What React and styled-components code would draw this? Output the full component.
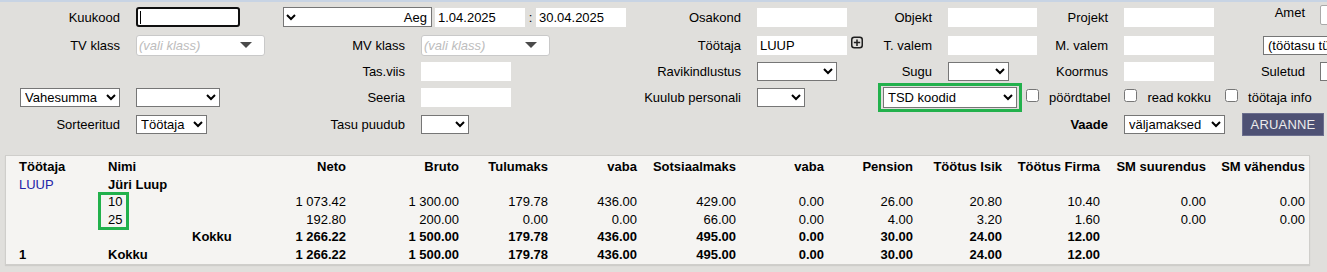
import React from "react";
import styled, { createGlobalStyle, css } from "styled-components";

const GlobalStyle = createGlobalStyle`
  html, body { margin: 0; padding: 0; overflow: hidden; background: #e0dfdc; }
  body { font-family: "Liberation Sans", Arial, sans-serif; font-size: 13px; color: #000; }
`;

const font = css`
  font-family: "Liberation Sans", Arial, sans-serif;
  font-size: 13px;
  color: #000;
`;

const place = css`
  grid-row: ${(p) => p.$r};
  grid-column: ${(p) => p.$c} / ${(p) => (p.$e ? p.$e : `span ${p.$s || 1}`)};
`;

const Page = styled.div`
  width: 1327px;
  height: 272px;
  overflow: hidden;
  box-sizing: border-box;
  border-top: 2px solid #c8d4e4;
`;

const Filters = styled.form`
  display: grid;
  grid-template-columns: 136px 144px 141px 209px 127px 109px 82px 89px 87px 90px 106px 1fr;
  grid-template-rows: 28px 28px 25px 26px 28px;
  padding-top: 1px;
  margin: 0;
  align-items: center;
`;

const Label = styled.label`
  ${place};
  ${font};
  text-align: right;
  white-space: nowrap;
  line-height: 15px;
  padding-right: ${(p) => (p.$pr != null ? p.$pr : 16)}px;
  font-weight: ${(p) => (p.$bold ? "bold" : "normal")};
  align-self: ${(p) => (p.$top ? "start" : "center")};
  padding-top: ${(p) => (p.$top ? 2 : 0)}px;
`;

const Field = styled.div`
  ${place};
  display: flex;
  align-items: center;
  gap: ${(p) => p.$gap || 0}px;
  padding-left: ${(p) => p.$pl || 0}px;
`;

const TextInput = styled.input`
  ${place};
  ${font};
  width: ${(p) => p.$w || 90}px;
  height: 19px;
  box-sizing: border-box;
  border: none;
  background: #fff;
  padding: 0 3px;
  margin: 0;
  outline: none;
`;

const FramedInput = styled.input`
  ${place};
  ${font};
  align-self: start;
  margin: 2px 0 0 0;
  width: 80px;
  height: 20px;
  box-sizing: border-box;
  border: 1px solid #a9a9a9;
  border-radius: 2px;
  background: #fff;
`;

const FocusField = styled.div`
  ${place};
  position: relative;
  width: 104px;
  height: 20px;
  box-sizing: border-box;
  border: 2px solid #101010;
  border-radius: 3px;
  background: #fff;
  &::after {
    content: "";
    position: absolute;
    left: 2px;
    top: 2px;
    width: 1px;
    height: 13px;
    background: #000;
  }
`;

const BareInput = styled.input`
  ${font};
  width: 100%;
  height: 100%;
  box-sizing: border-box;
  border: none;
  outline: none;
  background: transparent;
  padding: 0 3px;
  margin: 0;
`;

const Select = styled.select`
  ${place};
  ${font};
  width: ${(p) => p.$w}px;
  height: ${(p) => p.$h || 19}px;
  box-sizing: border-box;
  background: #fff;
  border: 1px solid #767676;
  border-radius: 0;
  margin: 0 ${(p) => p.$mr || 0}px 0 ${(p) => p.$ml || 0}px;
  justify-self: ${(p) => p.$justify || "start"};
`;

const ClassPicker = styled.div`
  ${place};
  width: 129px;
  height: 21px;
  box-sizing: border-box;
  border: 1px solid #c9c9c9;
  border-radius: 3px;
  background: #fff;
  display: flex;
  align-items: center;
  justify-content: space-between;
  padding: 0 12px 0 2px;
`;

const Placeholder = styled.span`
  ${font};
  font-style: italic;
  color: #bdbdbd;
`;

const Triangle = styled.span`
  width: 0;
  height: 0;
  border-left: 6px solid transparent;
  border-right: 6px solid transparent;
  border-top: 6px solid #4a4a4a;
`;

const Colon = styled.span`
  width: 11px;
  text-align: center;
  ${font};
`;

const PlusIcon = styled.svg`
  align-self: flex-start;
  margin-left: 4px;
  flex: none;
`;

const Options = styled.div`
  ${place};
  display: flex;
  align-items: center;
  padding-left: 12px;
`;

const Highlight = styled.div`
  display: flex;
  border: 3px solid #22b14c;
  padding: 1px 2px;
  margin-right: 4px;
`;

const CheckOption = styled.label`
  display: flex;
  align-items: center;
  gap: 10px;
  margin-right: 14px;
  ${font};
  white-space: nowrap;
  line-height: 15px;
`;

const CheckBox = styled.input`
  width: 13px;
  height: 13px;
  margin: 0 0 4px 0;
`;

const Button = styled.button`
  ${font};
  color: #ececec;
  background: #4e5174;
  border: 1px solid #6b6e8e;
  height: 23px;
  width: 82px;
  padding: 0;
  margin: 0;
  letter-spacing: 0.2px;
`;

const Results = styled.div`
  position: relative;
  margin: 17px 0 0 5px;
  width: 1305px;
  box-sizing: border-box;
  background: #f5f4f2;
  border: 1px solid #cfcecb;
  box-shadow: 0 1px 1px rgba(0, 0, 0, 0.08);
  padding: 2px 0 1px 9px;
`;

const Table = styled.table`
  border-collapse: collapse;
  table-layout: fixed;
  width: 1294px;
  ${font};
  th, td {
    padding: 0 4px;
    height: 17.5px;
    line-height: 15px;
    white-space: nowrap;
    overflow: hidden;
    text-align: left;
  }
  th { font-weight: bold; }
  th:nth-child(n + 4), td:nth-child(n + 4) { text-align: right; }
`;

const Row = styled.tr`
  font-weight: ${(p) => (p.$bold ? "bold" : "normal")};
`;

const EmployeeCode = styled.td`
  color: #2424a8;
`;

const Strong = styled.td`
  font-weight: bold;
`;

const Annotation = styled.div`
  position: absolute;
  left: 92px;
  top: 36px;
  width: 31px;
  height: 38px;
  box-sizing: border-box;
  border: 3px solid #22b14c;
  pointer-events: none;
`;

const widths = [89, 84, 52, 110, 113, 89, 89, 99, 88, 89, 89, 98, 106, 99];
const headers = ["Töötaja", "Nimi", "", "Neto", "Bruto", "Tulumaks", "vaba", "Sotsiaalmaks", "vaba", "Pension", "Töötus Isik", "Töötus Firma", "SM suurendus", "SM vähendus"];

const lines = [
  { cells: ["", "10", "", "1 073.42", "1 300.00", "179.78", "436.00", "429.00", "0.00", "26.00", "20.80", "10.40", "0.00", "0.00"] },
  { cells: ["", "25", "", "192.80", "200.00", "0.00", "0.00", "66.00", "0.00", "4.00", "3.20", "1.60", "0.00", "0.00"] },
  { bold: true, cells: ["", "", "Kokku", "1 266.22", "1 500.00", "179.78", "436.00", "495.00", "0.00", "30.00", "24.00", "12.00", "", ""] },
  { bold: true, cells: ["1", "Kokku", "", "1 266.22", "1 500.00", "179.78", "436.00", "495.00", "0.00", "30.00", "24.00", "12.00", "", ""] },
];

export default function App() {
  return (
    <Page>
      <GlobalStyle />
      <Filters onSubmit={(e) => e.preventDefault()}>
        {/* row 1 */}
        <Label $r={1} $c={1}>Kuukood</Label>
        <FocusField $r={1} $c={2}><BareInput defaultValue="" /></FocusField>
        <Field $r={1} $c={3} $s={2} $pl={3}>
          <Select $w={149} $h={20} dir="rtl" defaultValue="aeg"><option value="aeg">Aeg</option></Select>
          <TextInput $w={90} defaultValue="1.04.2025" style={{ marginLeft: 3 }} />
          <Colon>:</Colon>
          <TextInput $w={90} defaultValue="30.04.2025" />
        </Field>
        <Label $r={1} $c={5}>Osakond</Label>
        <TextInput $r={1} $c={6} $w={90} />
        <Label $r={1} $c={7}>Objekt</Label>
        <TextInput $r={1} $c={8} $w={89} />
        <Label $r={1} $c={9}>Projekt</Label>
        <TextInput $r={1} $c={10} $w={90} />
        <Label $r={1} $c={11} $pr={15} $top>Amet</Label>
        <FramedInput $r={1} $c={12} />

        {/* row 2 */}
        <Label $r={2} $c={1}>TV klass</Label>
        <ClassPicker $r={2} $c={2}><Placeholder>(vali klass)</Placeholder><Triangle /></ClassPicker>
        <Label $r={2} $c={3}>MV klass</Label>
        <ClassPicker $r={2} $c={4}><Placeholder>(vali klass)</Placeholder><Triangle /></ClassPicker>
        <Label $r={2} $c={5}>Töötaja</Label>
        <Field $r={2} $c={6}>
          <TextInput $w={90} defaultValue="LUUP" />
          <PlusIcon width="12" height="13" viewBox="0 0 12 13">
            <rect x="0.75" y="1.25" width="10.5" height="10.5" rx="2.5" fill="none" stroke="#1e1e1e" strokeWidth="1.5" />
            <path d="M6 3.6v6.3M2.85 6.5h6.3" stroke="#1e1e1e" strokeWidth="1.5" />
          </PlusIcon>
        </Field>
        <Label $r={2} $c={7}>T. valem</Label>
        <TextInput $r={2} $c={8} $w={89} />
        <Label $r={2} $c={9}>M. valem</Label>
        <TextInput $r={2} $c={10} $w={90} />
        <Select $r={2} $c={11} $e={13} $w={200} $ml={49} defaultValue="t"><option value="t">(töötasu tüüp)</option></Select>

        {/* row 3 */}
        <Label $r={3} $c={3}>Tas.viis</Label>
        <TextInput $r={3} $c={4} $w={90} />
        <Label $r={3} $c={5}>Ravikindlustus</Label>
        <Select $r={3} $c={6} $w={80} defaultValue=""><option value=""></option></Select>
        <Label $r={3} $c={7}>Sugu</Label>
        <Select $r={3} $c={8} $w={61} defaultValue=""><option value=""></option></Select>
        <Label $r={3} $c={9}>Koormus</Label>
        <TextInput $r={3} $c={10} $w={90} />
        <Label $r={3} $c={11} $pr={15}>Suletud</Label>
        <Select $r={3} $c={12} $w={60} defaultValue=""><option value=""></option></Select>

        {/* row 4 */}
        <Select $r={4} $c={1} $w={100} $mr={16} $justify="end" defaultValue="v"><option value="v">Vahesumma</option></Select>
        <Select $r={4} $c={2} $w={84} defaultValue=""><option value=""></option></Select>
        <Label $r={4} $c={3}>Seeria</Label>
        <TextInput $r={4} $c={4} $w={90} />
        <Label $r={4} $c={5}>Kuulub personali</Label>
        <Select $r={4} $c={6} $w={48} defaultValue=""><option value=""></option></Select>
        <Options $r={4} $c={7} $e={13}>
          <Highlight>
            <Select $w={134} $h={21} defaultValue="tsd"><option value="tsd">TSD koodid</option></Select>
          </Highlight>
          <CheckOption><CheckBox type="checkbox" />pöördtabel</CheckOption>
          <CheckOption><CheckBox type="checkbox" />read kokku</CheckOption>
          <CheckOption><CheckBox type="checkbox" />töötaja info</CheckOption>
        </Options>

        {/* row 5 */}
        <Label $r={5} $c={1}>Sorteeritud</Label>
        <Select $r={5} $c={2} $w={71} defaultValue="t"><option value="t">Töötaja</option></Select>
        <Label $r={5} $c={3}>Tasu puudub</Label>
        <Select $r={5} $c={4} $w={48} defaultValue=""><option value=""></option></Select>
        <Label $r={5} $c={9} $bold>Vaade</Label>
        <Field $r={5} $c={10} $e={13} $gap={17}>
          <Select $w={101} defaultValue="v"><option value="v">väljamaksed</option></Select>
          <Button type="button">ARUANNE</Button>
        </Field>
      </Filters>

      <Results>
        <Table>
          <colgroup>
            {widths.map((w, i) => (
              <col key={i} style={{ width: w }} />
            ))}
          </colgroup>
          <thead>
            <tr>
              {headers.map((h, i) => (
                <th key={i}>{h}</th>
              ))}
            </tr>
          </thead>
          <tbody>
            <tr>
              <EmployeeCode>LUUP</EmployeeCode>
              <Strong colSpan={2}>Jüri Luup</Strong>
              {Array.from({ length: 11 }).map((_, i) => (
                <td key={i} />
              ))}
            </tr>
            {lines.map((line, r) => (
              <Row key={r} $bold={line.bold}>
                {line.cells.map((c, i) => (
                  <td key={i}>{c.replace(/ /g, "\u00a0")}</td>
                ))}
              </Row>
            ))}
          </tbody>
        </Table>
        <Annotation />
      </Results>
    </Page>
  );
}
